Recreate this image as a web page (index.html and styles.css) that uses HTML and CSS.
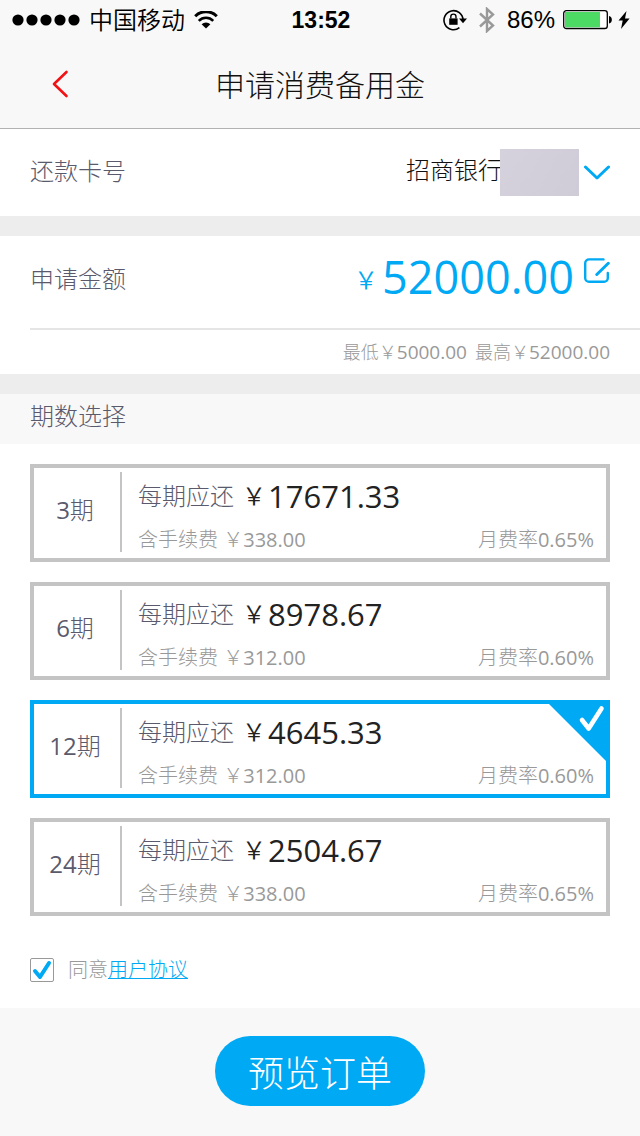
FILE: index.html
```html
<!DOCTYPE html>
<html lang="zh-CN">
<head>
    <meta charset="UTF-8">
    <meta name="viewport" content="width=device-width, initial-scale=1.0">
    <title>申请消费备用金</title>
    <link rel="stylesheet" href="styles.css">
</head>
<body>
    <div class="status-bar">
        <div class="status-left">
            <svg width="68" height="12" viewBox="0 0 68 12">
                <circle cx="6" cy="6" r="5.6"/>
                <circle cx="20" cy="6" r="5.6"/>
                <circle cx="34" cy="6" r="5.6"/>
                <circle cx="48" cy="6" r="5.6"/>
                <circle cx="62" cy="6" r="5.6"/>
            </svg>
            <span class="carrier">中国移动</span>
            <svg width="24" height="18" viewBox="0 0 24 18">
                <path d="M1.2 5.2a15.3 15.3 0 0 1 21.6 0" fill="none" stroke="#000" stroke-width="3"/>
                <path d="M4.8 9.8a10.2 10.2 0 0 1 14.4 0" fill="none" stroke="#000" stroke-width="2.6"/>
                <path d="M12 17.6l-4.4-4.4a6.4 6.4 0 0 1 8.8 0z"/>
            </svg>
        </div>
        <span class="time">13:52</span>
        <div class="status-right">
            <svg width="24" height="22" viewBox="0 0 24 22">
                <path d="M20 11a9.5 9.5 0 1 0-3.6 7.6" fill="none" stroke="#000" stroke-width="1.6"/>
                <path d="M16 9.6h8l-4 4.6z"/>
                <path d="M6.2 9.4h8.4v6.4H6.2z"/>
                <path d="M7.8 9.6V7.7a2.6 2.6 0 0 1 5.2 0v1.9" fill="none" stroke="#000" stroke-width="1.4"/>
            </svg>
            <svg class="bluetooth" width="16" height="26" viewBox="0 0 16 26">
                <path d="M1 6.500l13 12L8 24V2l6 5.500L1 19.500" fill="none" stroke="#999" stroke-width="2.400"/>
            </svg>
            <span class="battery-text">86%</span>
            <svg width="49" height="20" viewBox="0 0 49 20">
                <rect x=".7" y=".7" width="43.6" height="17.8" rx="2.6" fill="#fff" stroke="#000" stroke-width="1.3"/>
                <rect x="2" y="2" width="35" height="15.2" fill="#4cd964"/>
                <path d="M46 6c3.8.6 3.8 7 0 7.4z"/>
            </svg>
            <svg width="12" height="20" viewBox="0 0 12 20">
                <path d="M8.5 1L.5 10.6h4.2L3 19l8.6-10.4H7z"/>
            </svg>
        </div>
    </div>

    <header class="header">
        <button class="back" type="button" aria-label="返回">
            <svg width="18" height="30" viewBox="0 0 18 30">
                <path d="M15.5 3L3 15l12.5 12" fill="none" stroke="#f11215" stroke-width="2.6" stroke-linecap="round" stroke-linejoin="round"/>
            </svg>
        </button>
        <h1 class="title">申请消费备用金</h1>
    </header>

    <form>
        <div class="row card-row">
            <label class="row-label" for="card">还款卡号</label>
            <div class="card-value">
                <select class="card-select" id="card">
                    <option>招商银行</option>
                </select>
                <span class="card-mask"></span>
                <svg class="arrow" width="26" height="16" viewBox="0 0 26 16">
                    <path d="M1.5 2L13 13L24.5 2" fill="none" stroke="#00a9f4" stroke-width="3" stroke-linecap="round" stroke-linejoin="round"/>
                </svg>
            </div>
        </div>

        <div class="amount-box">
            <div class="row amount-row">
                <label class="row-label" for="amount">申请金额</label>
                <div class="amount-value">
                    <span class="amount-yen">￥</span>
                    <input class="amount-input" id="amount" type="text" value="52000.00">
                    <button class="edit" type="button" aria-label="修改金额">
                        <svg width="26" height="26" viewBox="0 0 26 26">
                            <path d="M19.5 1.4H5A3.8 3.8 0 0 0 1.2 5.200V20A3.8 3.8 0 0 0 5 23.8H20A3.8 3.8 0 0 0 23.8 20V15" fill="none" stroke="#00a9f4" stroke-width="2.4" stroke-linecap="round"/>
                            <path d="M24.3 5.300L12.800 16.500" stroke="#00a9f4" stroke-width="3" stroke-linecap="round"/>
                        </svg>
                    </button>
                </div>
            </div>
            <div class="limits">
                <span>最低￥<span class="num">5000.00</span></span>
                <span>最高￥<span class="num">52000.00</span></span>
            </div>
        </div>

        <h2 class="section-title">期数选择</h2>

        <div class="plans">
            <label class="plan">
                <input type="radio" name="plan" value="3">
                <span class="plan-period"><span class="num">3</span>期</span>
                <span class="plan-info">
                    <span class="plan-pay">每期应还<span class="plan-yen">￥</span><b>17671.33</b></span>
                    <span class="plan-fee"><span>含手续费 ￥<span class="num">338.00</span></span><span>月费率<span class="num">0.65%</span></span></span>
                </span>
            </label>
            <label class="plan">
                <input type="radio" name="plan" value="6">
                <span class="plan-period"><span class="num">6</span>期</span>
                <span class="plan-info">
                    <span class="plan-pay">每期应还<span class="plan-yen">￥</span><b>8978.67</b></span>
                    <span class="plan-fee"><span>含手续费 ￥<span class="num">312.00</span></span><span>月费率<span class="num">0.60%</span></span></span>
                </span>
            </label>
            <label class="plan">
                <input type="radio" name="plan" value="12" checked>
                <span class="plan-period"><span class="num">12</span>期</span>
                <span class="plan-info">
                    <span class="plan-pay">每期应还<span class="plan-yen">￥</span><b>4645.33</b></span>
                    <span class="plan-fee"><span>含手续费 ￥<span class="num">312.00</span></span><span>月费率<span class="num">0.60%</span></span></span>
                </span>
                <svg class="corner" width="57" height="57" viewBox="0 0 57 57">
                    <path d="M0 0h57v57z" fill="#00a9f4"/>
                    <path d="M33 16l6.700 8.500L52.500 4.500" fill="none" stroke="#fff" stroke-width="4.600" stroke-linecap="round" stroke-linejoin="round"/>
                </svg>
            </label>
            <label class="plan">
                <input type="radio" name="plan" value="24">
                <span class="plan-period"><span class="num">24</span>期</span>
                <span class="plan-info">
                    <span class="plan-pay">每期应还<span class="plan-yen">￥</span><b>2504.67</b></span>
                    <span class="plan-fee"><span>含手续费 ￥<span class="num">338.00</span></span><span>月费率<span class="num">0.65%</span></span></span>
                </span>
            </label>
        </div>

        <div class="agree">
            <input class="agree-check" id="agree" type="checkbox" checked>
            <p><label for="agree">同意</label><a href="#">用户协议</a></p>
        </div>

        <div class="footer">
            <button class="submit" type="submit">预览订单</button>
        </div>
    </form>
</body>
</html>
```
FILE: styles.css
```css
* {
    box-sizing: border-box;
}
body {
    margin: 0;
    font-family: "Open Sans", "Noto Sans CJK SC", sans-serif;
    font-size: 24px;
    font-weight: 300;
    color: #5a5a6c;
    background: #fff;
}
svg {
    display: block;
    flex: none;
}
button, input, select {
    font: inherit;
    color: inherit;
    margin: 0;
    padding: 0;
    border: none;
    background: none;
}
.num {
    font-weight: 400;
}

/* status bar */
.status-bar {
    display: grid;
    grid-template-columns: 1fr auto 1fr;
    align-items: center;
    height: 40px;
    padding: 0 10px 0 12px;
    background: #f8f8f8;
    color: #000;
    line-height: 40px;
}
.status-left, .status-right {
    display: flex;
    align-items: center;
}
.status-left {
    gap: 9px;
}
.carrier {
    font-size: 24px;
    font-weight: 350;
}
.status-right {
    justify-content: flex-end;
    gap: 6px;
}
.bluetooth {
    margin: 0 6px;
}
.time, .battery-text {
    font-family: "Liberation Sans", Arial, sans-serif;
    font-size: 24px;
    font-weight: 400;
}
.battery-text {
    margin-right: 2px;
}
.time {
    font-size: 23px;
    font-weight: 700;
}

/* header */
.header {
    display: grid;
    grid-template-columns: 60px 1fr 60px;
    align-items: center;
    height: 89px;
    padding: 0 30px;
    background: #f8f8f8;
    border-bottom: 1px solid #b2b2b2;
}
.back {
    display: flex;
    justify-content: center;
    cursor: pointer;
}
.title {
    margin: 0;
    padding-bottom: 2px;
    font-size: 30px;
    font-weight: 300;
    text-align: center;
    color: #111;
}

/* rows */
.row {
    display: flex;
    align-items: center;
    justify-content: space-between;
    padding-right: 30px;
}
.row-label {
    padding-bottom: 6px;
}
.card-row {
    height: 87px;
    padding-left: 30px;
}
.card-value {
    display: flex;
    align-items: center;
}
.card-select {
    appearance: none;
    padding-bottom: 6px;
    color: #111;
}
/* covers the card digits after the bank name */
.card-mask {
    width: 79px;
    height: 47px;
    margin: 0 5px 0 -2px;
    background: linear-gradient(120deg, #d5d2de, #cfcbd7);
}
.amount-box {
    padding-left: 30px;
    border-top: 20px solid #ededed;
    border-bottom: 20px solid #ededed;
}
.amount-row {
    height: 94px;
    padding-bottom: 4px;
    border-bottom: 2px solid #e5e5e5;
}
.amount-value {
    display: flex;
    align-items: center;
    padding-bottom: 8px;
    color: #00a9f4;
}
.amount-yen {
    padding-top: 4px;
    font-weight: 350;
}
.amount-input {
    width: 196px;
    height: 64px;
    font-size: 45px;
    font-weight: 400;
    text-align: right;
}
.edit {
    align-self: flex-start;
    padding: 14px 0 0 10px;
    cursor: pointer;
}
.limits {
    display: flex;
    justify-content: flex-end;
    gap: 8px;
    padding-right: 30px;
    font-size: 18px;
    line-height: 44px;
    color: #999;
}
.limits .num {
    font-size: 19px;
}
.section-title {
    margin: 0;
    padding: 0 30px 6px;
    font-size: 24px;
    font-weight: 300;
    line-height: 44px;
    background: #f8f8f8;
}

/* plans */
.plans {
    display: flex;
    flex-direction: column;
    gap: 20px;
    padding: 20px 30px;
}
.plan {
    position: relative;
    display: flex;
    align-items: flex-start;
    padding: 4px 0 3px;
    border: 4px solid #c4c4c4;
    cursor: pointer;
}
.plan input {
    position: absolute;
    opacity: 0;
}
.plan:has(input:checked) {
    border-color: #00a9f4;
}
.plan-period {
    width: 88px;
    height: 80px;
    padding-right: 4px;
    border-right: 2px solid #c4c4c4;
    line-height: 76px;
    text-align: center;
}
.plan-info {
    flex: 1;
    padding: 0 12px 0 16px;
}
.plan-pay {
    display: flex;
    align-items: center;
    height: 48px;
    line-height: 48px;
}
.plan-yen {
    margin-left: 8px;
    font-weight: 350;
    color: #222;
}
.plan b {
    margin-left: 2px;
    font-size: 31px;
    font-weight: 400;
    color: #222;
}
.plan-fee {
    display: flex;
    justify-content: space-between;
    margin-top: 5px;
    font-size: 20px;
    line-height: 30px;
    color: #999;
}
.corner {
    position: absolute;
    top: 0;
    right: 0;
}

/* agreement */
.agree {
    display: flex;
    align-items: center;
    gap: 14px;
    padding: 18px 30px 22px;
    font-size: 20px;
    line-height: 32px;
    color: #999;
}
.agree p {
    margin: 0;
}
.agree a {
    color: #00a9f4;
    text-decoration-thickness: 1px;
}
.agree-check {
    appearance: none;
    width: 24px;
    height: 24px;
    border: 1px solid #999;
    border-radius: 2px;
}
.agree-check:checked {
    background: url("data:image/svg+xml,%3Csvg xmlns='http://www.w3.org/2000/svg' viewBox='0 0 22 22'%3E%3Cpath d='M4 12l5 6L18 4' fill='none' stroke='%2300a9f4' stroke-width='4' stroke-linecap='round' stroke-linejoin='round'/%3E%3C/svg%3E") center / 22px 22px no-repeat;
}

/* footer */
.footer {
    padding: 28px 30px 30px;
    background: #f8f8f8;
    text-align: center;
}
.submit {
    height: 70px;
    padding: 0 33px;
    border-radius: 35px;
    font-size: 36px;
    color: #fff;
    background: #00a9f4;
    vertical-align: top;
    cursor: pointer;
}
```
